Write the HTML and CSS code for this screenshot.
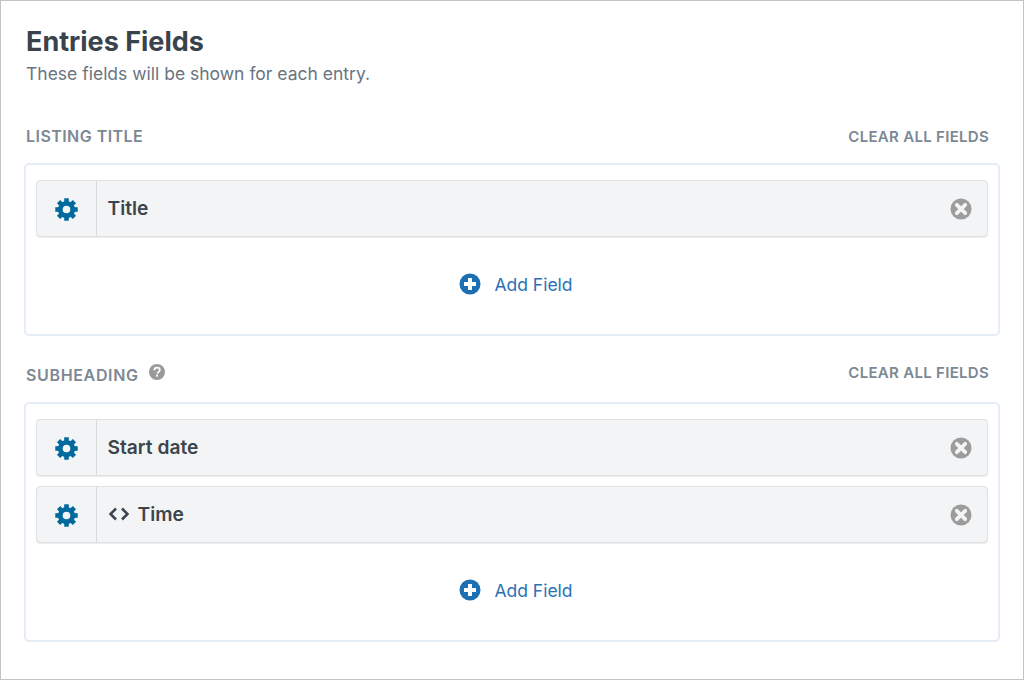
FILE: index.html
```html
<!DOCTYPE html>
<html lang="en">
<head>
<meta charset="utf-8">
<title>Entries Fields</title>
<link rel="stylesheet" href="styles.css">
</head>
<body>
<svg class="defs" width="0" height="0" aria-hidden="true">
  <defs>
    <symbol id="gear" viewBox="0 0 24 24">
      <path fill-rule="evenodd" d="M12 3a9 9 0 1 0 0 18 9 9 0 0 0 0-18zM12 8a4 4 0 1 1 0 8 4 4 0 0 1 0-8z"/>
      <rect x="9.600" y="0.300" width="4.800" height="4.500"/>
      <rect x="9.600" y="0.300" width="4.800" height="4.500" transform="rotate(45 12 12)"/>
      <rect x="9.600" y="0.300" width="4.800" height="4.500" transform="rotate(90 12 12)"/>
      <rect x="9.600" y="0.300" width="4.800" height="4.500" transform="rotate(135 12 12)"/>
      <rect x="9.600" y="0.300" width="4.800" height="4.500" transform="rotate(180 12 12)"/>
      <rect x="9.600" y="0.300" width="4.800" height="4.500" transform="rotate(225 12 12)"/>
      <rect x="9.600" y="0.300" width="4.800" height="4.500" transform="rotate(270 12 12)"/>
      <rect x="9.600" y="0.300" width="4.800" height="4.500" transform="rotate(315 12 12)"/>
    </symbol>
    <symbol id="remove" viewBox="0 0 22 22">
      <circle cx="11" cy="11" r="10.500"/>
      <path d="M6.800 6.800l8.400 8.400M15.200 6.800l-8.400 8.400" stroke="#f3f4f5" stroke-width="3.800" stroke-linecap="round" fill="none"/>
    </symbol>
    <symbol id="plus" viewBox="0 0 22 22">
      <circle cx="11" cy="11" r="10.500"/>
      <path d="M11 5v12M5 11h12" stroke="#fff" stroke-width="4" fill="none"/>
    </symbol>
  </defs>
</svg>
<main class="window">
  <h1 class="title">Entries Fields</h1>
  <p class="desc">These fields will be shown for each entry.</p>

  <section class="area area-first">
    <header class="area-head">
      <h2 class="area-label">LISTING TITLE</h2>
      <a class="clear" href="#">CLEAR ALL FIELDS</a>
    </header>
    <div class="box">
      <div class="field">
        <span class="field-gear"><svg class="icon-gear"><use href="#gear"/></svg></span>
        <span class="field-name">Title</span>
        <svg class="icon-remove"><use href="#remove"/></svg>
      </div>
      <a class="add" href="#"><svg class="icon-plus"><use href="#plus"/></svg>Add Field</a>
    </div>
  </section>

  <section class="area area-second">
    <header class="area-head">
      <h2 class="area-label">SUBHEADING
        <svg class="icon-help" viewBox="0 0 16 16"><circle cx="8" cy="8" r="8"/><path d="M5.300 6.200C5.400 4.600 6.500 3.700 8.100 3.700c1.500 0 2.700.9 2.700 2.300 0 1.100-.6 1.600-1.400 2.100-.7.4-.9.700-.9 1.300" fill="none" stroke="#fff" stroke-width="1.800"/><rect x="7.050" y="10.600" width="2" height="2" fill="#fff"/></svg>
      </h2>
      <a class="clear" href="#">CLEAR ALL FIELDS</a>
    </header>
    <div class="box">
      <div class="field">
        <span class="field-gear"><svg class="icon-gear"><use href="#gear"/></svg></span>
        <span class="field-name">Start date</span>
        <svg class="icon-remove"><use href="#remove"/></svg>
      </div>
      <div class="field field-next">
        <span class="field-gear"><svg class="icon-gear"><use href="#gear"/></svg></span>
        <span class="field-name">
          <svg class="icon-code" viewBox="0 0 22 14"><path d="M8 1.500L2.500 7 8 12.500M14 1.500L19.500 7 14 12.500" fill="none" stroke="#3c444c" stroke-width="2.500"/></svg>Time
        </span>
        <svg class="icon-remove"><use href="#remove"/></svg>
      </div>
      <a class="add" href="#"><svg class="icon-plus"><use href="#plus"/></svg>Add Field</a>
    </div>
  </section>
</main>
</body>
</html>
```

FILE: styles.css
```css
* { box-sizing: border-box; }
html, body { margin: 0; padding: 0; }
body { background: #fff; font-family: Inter, "Liberation Sans", sans-serif; }
.defs { position: absolute; }
.window {
  width: 1024px;
  height: 680px;
  border: 1px solid #c4c4c4;
  padding: 25px 23px 0 23px;
  overflow: hidden;
}
.title {
  margin: 0 0 0 2px;
  font-size: 27px;
  line-height: 32px;
  font-weight: 700;
  color: #3a434b;
}
.desc {
  margin: 4px 0 0 2px;
  font-size: 17.5px;
  line-height: 24px;
  color: #69747f;
}
.area-first { margin-top: 39px; }
.area-second { margin-top: 27px; }
.area-head {
  display: flex;
  justify-content: space-between;
  align-items: center;
  height: 24px;
  padding: 0 11px 0 2px;
}
.area-label {
  margin: -2px 0 0;
  display: flex;
  align-items: center;
  gap: 10px;
  font-size: 16px;
  line-height: 24px;
  font-weight: 600;
  letter-spacing: 0.45px;
  color: #7c8893;
}
.clear {
  font-size: 15px;
  line-height: 24px;
  font-weight: 600;
  letter-spacing: 0.3px;
  color: #7c8893;
  text-decoration: none;
}
.area-second .area-label { margin-top: 0; letter-spacing: 0.65px; }
.area-second .clear { margin-top: -4px; }
.icon-help { width: 16px; height: 16px; fill: #9a9a9a; margin-top: -7px; }
.box {
  margin-top: 14px;
  border: 2px solid #e4ecf5;
  border-radius: 5px;
  padding: 15px 10px 0;
}
.area-second .box { margin-top: 15px; }
.area-first .box { height: 173px; }
.area-second .box { height: 240px; }
.field {
  display: flex;
  align-items: center;
  height: 57px;
  background: #f3f4f5;
  border: 1px solid #dfe1e3;
  border-radius: 4px;
  box-shadow: 0 1px 1px rgba(0, 0, 0, 0.08);
}
.field-next { margin-top: 10px; }
.field-gear {
  flex: none;
  width: 60px;
  align-self: stretch;
  display: flex;
  align-items: center;
  justify-content: center;
  padding-top: 1px;
  border-right: 1px solid #d8dadc;
}
.icon-gear { width: 23px; height: 23px; fill: #00699d; }
.field-name {
  flex: 1;
  display: flex;
  align-items: center;
  padding: 0 0 1px 10.5px;
  font-size: 19.2px;
  font-weight: 600;
  color: #3c444c;
}
.icon-code { width: 22px; height: 14px; margin-right: 8px; }
.icon-remove { flex: none; width: 22px; height: 22px; fill: #9c9c9c; margin-right: 15.5px; margin-top: 1px; }
.add {
  display: flex;
  align-items: center;
  justify-content: center;
  height: 94px;
  padding-left: 8px;
  font-size: 17.500px;
  color: #2a72b5;
  text-decoration: none;
}
.icon-plus { width: 22px; height: 22px; fill: #1c6fb2; margin-right: 13px; }
```
